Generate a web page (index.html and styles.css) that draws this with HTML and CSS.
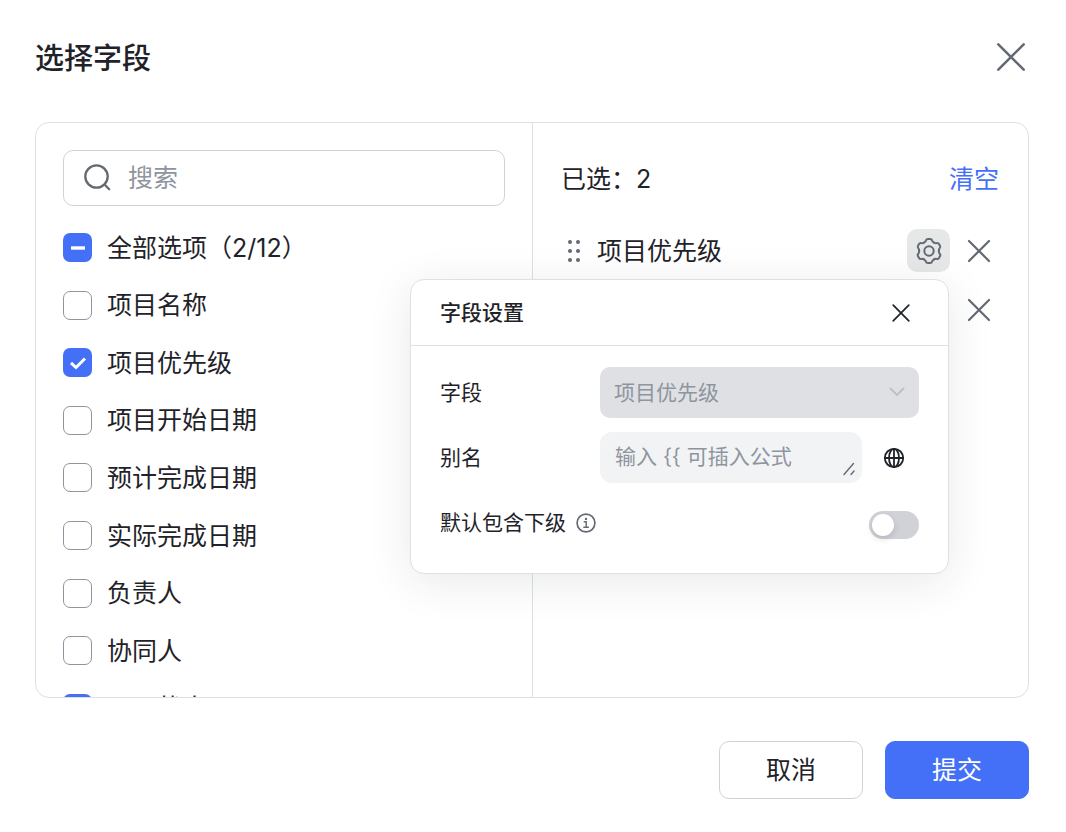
FILE: index.html
```
<!DOCTYPE html>
<html lang="zh-CN">
    <head>
        <meta charset="UTF-8">
        <meta name="viewport" content="width=device-width, initial-scale=1.0">
        <title>选择字段</title>
        <link rel="stylesheet" href="styles.css">
    </head>
    <body>
        <div class="dialog">
            <header class="dialog-header">
                <h1>选择字段</h1>
                <button type="button" class="icon-btn" aria-label="关闭">
                    <svg width="36" height="36" viewBox="0 0 36 36"><path d="M5.3 5.3 30.7 30.7M30.7 5.3 5.3 30.7" stroke-width="2.6"/></svg>
                </button>
            </header>

            <main class="panel">
                <section class="source">
                    <label class="search">
                        <svg width="30" height="30" viewBox="0 0 30 30"><circle cx="13.5" cy="13.5" r="11.2" stroke-width="2.3"/><path d="m21.8 21.8 4.4 4.4" stroke-width="2.3"/></svg>
                        <input type="text" placeholder="搜索" aria-label="搜索">
                    </label>
                    <div class="options">
                        <label class="option"><input type="checkbox" class="partial"><span>全部选项（2/12）</span></label>
                        <label class="option"><input type="checkbox"><span>项目名称</span></label>
                        <label class="option"><input type="checkbox" checked><span>项目优先级</span></label>
                        <label class="option"><input type="checkbox"><span>项目开始日期</span></label>
                        <label class="option"><input type="checkbox"><span>预计完成日期</span></label>
                        <label class="option"><input type="checkbox"><span>实际完成日期</span></label>
                        <label class="option"><input type="checkbox"><span>负责人</span></label>
                        <label class="option"><input type="checkbox"><span>协同人</span></label>
                        <label class="option"><input type="checkbox" checked><span>项目状态</span></label>
                    </div>
                </section>

                <section class="selected">
                    <div class="selected-header">
                        <span>已选：<span class="count">2</span></span>
                        <button type="button" class="link-btn">清空</button>
                    </div>
                    <ul class="selected-list">
                        <li>
                            <svg class="drag" width="14" height="24" viewBox="0 0 14 24"><circle cx="3" cy="3" r="2"/><circle cx="11" cy="3" r="2"/><circle cx="3" cy="12" r="2"/><circle cx="11" cy="12" r="2"/><circle cx="3" cy="21" r="2"/><circle cx="11" cy="21" r="2"/></svg>
                            <span class="name">项目优先级</span>
                            <button type="button" class="icon-btn active" aria-label="设置">
                                <svg width="28" height="28" viewBox="-14 -14 28 28" stroke-width="2">
                                    <path id="tooth" d="M-4.9-8.5Q-3.4-9.4-3.1-10.4Q-2.7-12.1-1-12.1H1Q2.7-12.1 3.1-10.4Q3.4-9.4 4.9-8.5"/>
                                    <use href="#tooth" transform="rotate(60)"/>
                                    <use href="#tooth" transform="rotate(120)"/>
                                    <use href="#tooth" transform="rotate(180)"/>
                                    <use href="#tooth" transform="rotate(240)"/>
                                    <use href="#tooth" transform="rotate(300)"/>
                                    <circle r="4.7"/>
                                </svg>
                            </button>
                            <button type="button" class="icon-btn" aria-label="移除项目优先级">
                                <svg width="28" height="28" viewBox="0 0 28 28"><path d="m4 4 20 20M24 4 4 24" stroke-width="2.2"/></svg>
                            </button>
                        </li>
                        <li>
                            <svg class="drag" width="14" height="24" viewBox="0 0 14 24"><circle cx="3" cy="3" r="2"/><circle cx="11" cy="3" r="2"/><circle cx="3" cy="12" r="2"/><circle cx="11" cy="12" r="2"/><circle cx="3" cy="21" r="2"/><circle cx="11" cy="21" r="2"/></svg>
                            <span class="name">项目状态</span>
                            <button type="button" class="icon-btn" aria-label="移除项目状态">
                                <svg width="28" height="28" viewBox="0 0 28 28"><path d="m4 4 20 20M24 4 4 24" stroke-width="2.2"/></svg>
                            </button>
                        </li>
                    </ul>
                </section>

                <div class="popover">
                    <div class="popover-header">
                        <h2>字段设置</h2>
                        <button type="button" class="icon-btn dark" aria-label="关闭">
                            <svg width="20" height="20" viewBox="0 0 20 20"><path d="m2.2 2.2 15.6 15.6M17.8 2.2 2.2 17.8" stroke-width="1.7"/></svg>
                        </button>
                    </div>
                    <form class="popover-body">
                        <div class="form-row">
                            <label for="field">字段</label>
                            <div class="select-wrap">
                                <select id="field" disabled>
                                    <option>项目优先级</option>
                                </select>
                                <svg width="16" height="10" viewBox="0 0 16 10"><path d="m1.5 1.5 6.5 6.5 6.5-6.5" stroke-width="1.8"/></svg>
                            </div>
                        </div>
                        <div class="form-row">
                            <label for="alias">别名</label>
                            <div class="alias-wrap">
                                <textarea id="alias" rows="1" placeholder="输入 {{ 可插入公式"></textarea>
                                <svg width="12" height="14" viewBox="0 0 12 14"><path d="M1 12.5 10.5 1.5M8 12.5 11 9" stroke-width="1.4"/></svg>
                            </div>
                            <button type="button" class="icon-btn dark globe" aria-label="多语言">
                                <svg width="22" height="22" viewBox="0 0 22 22"><circle cx="11" cy="11" r="9.2"/><ellipse cx="11" cy="11" rx="5" ry="9.2"/><path d="M11 1.8v18.4M1.8 11h18.4" /></svg>
                            </button>
                        </div>
                        <div class="form-row">
                            <label for="children">默认包含下级</label>
                            <svg class="info" width="20" height="20" viewBox="0 0 20 20"><circle cx="10" cy="10" r="8.9" stroke-width="1.7"/><path d="M8.2 8.7h2v5.4M7.8 14.2h4.6" stroke-width="1.4"/><circle class="dot" cx="10" cy="5.9" r="1.2"/></svg>
                            <input type="checkbox" role="switch" id="children" class="switch">
                        </div>
                    </form>
                </div>
            </main>

            <footer class="dialog-footer">
                <button type="button" class="btn">取消</button>
                <button type="button" class="btn btn-primary">提交</button>
            </footer>
        </div>

        <script>
        document.querySelector('.partial').indeterminate = true;
        </script>
    </body>
</html>
```
FILE: styles.css
```
* {
    margin: 0;
    padding: 0;
    box-sizing: border-box;
}

body {
    background-color: #fff;
    color: #1f2329;
    font-family: Inter, "Noto Sans CJK SC", sans-serif;
    font-size: 25px;
    line-height: 36px;
}

button, input, select, textarea {
    font: inherit;
    color: inherit;
    border: none;
    background: none;
    outline: none;
}

button {
    cursor: pointer;
}

svg {
    display: block;
    flex: none;
    fill: none;
    stroke: #646a73;
    stroke-linecap: round;
}

.dialog {
    padding: 36px 37px 32px 35px;
}

.dialog-header {
    display: flex;
    justify-content: space-between;
    align-items: center;
    height: 42px;
    margin-bottom: 44px;
}

h1 {
    padding-top: 3px;
    font-size: 29px;
    font-weight: 500;
}

.icon-btn {
    display: flex;
    align-items: center;
    justify-content: center;
}

.icon-btn.active {
    width: 43px;
    height: 43px;
    border-radius: 10px;
    background-color: #e6e8e8;
}

.icon-btn.dark svg {
    stroke: #1f2329;
}

.panel {
    position: relative;
    display: grid;
    grid-template-columns: calc(50% + 1px) 1fr;
    height: 576px;
    border: 1px solid #dee0e3;
    border-radius: 14px;
}

.source {
    padding: 27px;
    border-right: 1px solid #dee0e3;
    overflow: hidden;
}

.search {
    display: flex;
    align-items: center;
    gap: 15px;
    height: 56px;
    padding: 0 19px;
    border: 1px solid #d0d3d6;
    border-radius: 10px;
}

.search input {
    flex: 1;
    min-width: 0;
}

::placeholder {
    color: #8f959e;
    opacity: 1;
}

.options {
    display: grid;
    grid-auto-rows: 1fr;
    height: 518px;
    margin-top: 13px;
}

.option {
    display: flex;
    align-items: center;
    gap: 15px;
}

.option input {
    appearance: none;
    width: 29px;
    height: 29px;
    border: 1px solid #8f959e;
    border-radius: 7px;
}

.option input:checked,
.option input:indeterminate {
    border: none;
    background: #4470f8 url("data:image/svg+xml,%3Csvg xmlns='http://www.w3.org/2000/svg' viewBox='0 0 29 29'%3E%3Cpath d='m8 14.8 5 4.7 9-9' fill='none' stroke='white' stroke-width='3'/%3E%3C/svg%3E");
}

.option input:indeterminate {
    background-image: url("data:image/svg+xml,%3Csvg xmlns='http://www.w3.org/2000/svg' viewBox='0 0 29 29'%3E%3Cpath d='M8 15h14' stroke='white' stroke-width='3.4'/%3E%3C/svg%3E");
}

.selected {
    padding: 38px 29px 27px 28px;
}

.selected-header {
    display: flex;
    justify-content: space-between;
}

.link-btn {
    color: #4470f8;
}

.selected-list {
    list-style: none;
    margin-top: 24px;
}

.selected-list li {
    display: flex;
    align-items: center;
    height: 59px;
    padding: 0 6px;
}

.drag {
    fill: #646a73;
    stroke: none;
}

.name {
    flex: 1;
    padding-left: 16px;
}

.icon-btn.active + .icon-btn {
    margin-left: 15px;
}

/* field settings, opened from the gear button */
.popover {
    position: absolute;
    top: 156px;
    right: 79px;
    width: 539px;
    border: 1px solid #dee0e3;
    border-radius: 14px;
    background-color: #fff;
    box-shadow: 0 8px 44px rgba(31, 35, 41, 0.1);
    font-size: 21px;
    line-height: 32px;
}

.popover-header {
    display: flex;
    justify-content: space-between;
    align-items: center;
    height: 66px;
    padding: 0 37px 0 29px;
    border-bottom: 1px solid #dee0e3;
}

h2 {
    font-size: 21px;
    font-weight: 500;
}

.popover-body {
    display: grid;
    gap: 14px;
    padding: 21px 29px 25px;
}

.form-row {
    display: flex;
    align-items: center;
    height: 51px;
}

.select-wrap,
.alias-wrap {
    position: relative;
    flex: 1;
    height: 51px;
    margin-left: auto;
}

.form-row label[for="field"],
.form-row label[for="alias"] {
    width: 160px;
}

select {
    appearance: none;
    display: block;
    width: 100%;
    height: 51px;
    padding: 0 14px;
    border-radius: 10px;
    background-color: #dee0e3;
}

select:disabled {
    color: #8f959e;
    opacity: 1;
}

.select-wrap svg {
    position: absolute;
    right: 14px;
    top: 20px;
    stroke: #bbbfc4;
}

textarea {
    display: block;
    width: 100%;
    height: 51px;
    padding: 9px 15px;
    border-radius: 12px;
    background-color: #f2f3f5;
    resize: none;
    overflow: hidden;
    white-space: nowrap;
}

.alias-wrap svg {
    position: absolute;
    right: 7px;
    bottom: 7px;
}

.globe {
    width: 57px;
    padding-left: 7px;
}

.globe svg {
    stroke-width: 1.8;
}

.info {
    margin-left: 10px;
}

.info .dot {
    fill: #646a73;
    stroke: none;
}

.switch {
    appearance: none;
    width: 50px;
    height: 28px;
    margin-top: 5px;
    margin-left: auto;
    padding: 3px;
    border-radius: 14px;
    background-color: #d0d2d7;
    cursor: pointer;
}

.switch::before {
    content: "";
    display: block;
    width: 22px;
    height: 22px;
    border-radius: 50%;
    background-color: #fff;
    box-shadow: 0 3px 6px rgba(31, 35, 41, 0.15);
}

.switch:checked {
    background-color: #4470f8;
}

.switch:checked::before {
    margin-left: auto;
}

.dialog-footer {
    display: flex;
    justify-content: flex-end;
    gap: 22px;
    margin-top: 43px;
}

.btn {
    width: 144px;
    height: 58px;
    border: 1px solid #d0d3d6;
    border-radius: 10px;
}

.btn-primary {
    border-color: #4470f8;
    background-color: #4470f8;
    color: #fff;
}
```
